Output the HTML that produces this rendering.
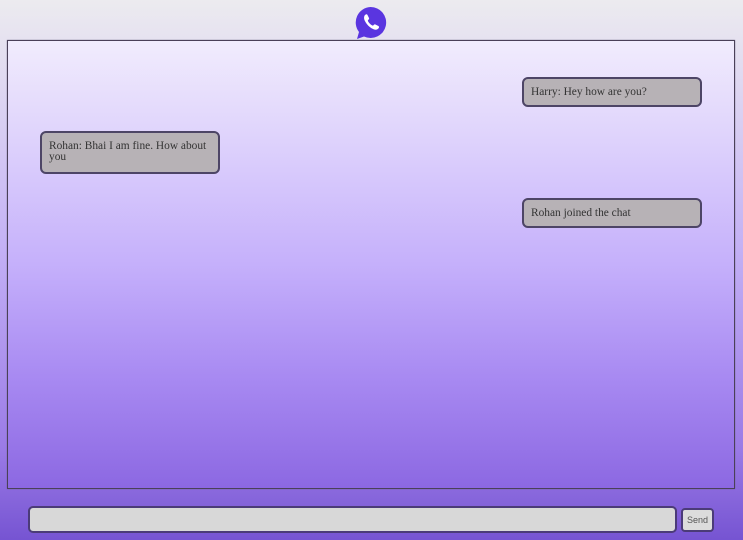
<!DOCTYPE html>
<html><head><style>
html,body{margin:0;padding:0;width:743px;height:540px;overflow:hidden}
body{background:linear-gradient(to bottom,#ecebef 0px,#e6e2f0 40px,#c3b0f5 250px,#9a7ae6 450px,#7654d2 540px);font-family:"Liberation Serif",serif;position:relative}
.logo{position:absolute;left:354px;top:6px;width:33px;height:33px}
.box{position:absolute;left:7px;top:40px;width:726px;height:447px;border:1px solid #4a4058;box-shadow:0 0 1px #6a6080;background:linear-gradient(to bottom,#f1ecfd 0%,#e0d5fc 20%,#c5b0fb 50%,#a88af2 75%,#8c68e2 100%)}
.msg{position:absolute;background:#b7b2b6;border:2px solid #4d4566;border-radius:6px;font-size:11.4px;color:#333;padding:0 7px;box-sizing:border-box;line-height:11px}
.inp{position:absolute;left:28px;top:506px;width:649px;height:27px;background:#d8d8d8;border:2px solid #4b3b78;border-radius:5px;box-sizing:border-box}
.btn{position:absolute;left:681px;top:508px;width:33px;height:24px;background:#dcdcdc;border:2px solid #4b3b78;border-radius:4px;box-sizing:border-box;font-family:"Liberation Sans",sans-serif;font-size:9px;color:#555;text-align:center;line-height:20px}
</style></head><body>
<svg class="logo" viewBox="0 0 33 33"><path d="M16.5 1A15.5 15.5 0 1 1 10 30.5L3 33L5 26A15.5 15.5 0 0 1 16.5 1Z" fill="#5a35e0"/><path d="M11 9c1-1 2-1 2.5 0l1.5 3c.3.8 0 1.3-.8 1.9-.5.4-.4 1 .1 1.8 1 1.6 2.2 2.7 3.6 3.6.7.4 1.2.4 1.6-.1.6-.8 1.1-1 1.9-.7l3 1.5c.9.5.9 1.5 0 2.5-1.4 1.5-3.3 1.6-5.6.4-3.5-1.8-6.3-4.7-8-8.2-1.1-2.4-.9-4.3 .2-5.7z" fill="#fff"/></svg>
<div class="box"></div>
<div class="msg" style="left:522px;top:77px;width:180px;height:30px;line-height:26px">Harry: Hey how are you?</div>
<div class="msg" style="left:40px;top:131px;width:180px;height:43px;padding-top:8px">Rohan: Bhai I am fine. How about you</div>
<div class="msg" style="left:522px;top:198px;width:180px;height:30px;line-height:26px">Rohan joined the chat</div>
<div class="inp"></div>
<div class="btn">Send</div>
</body></html>
